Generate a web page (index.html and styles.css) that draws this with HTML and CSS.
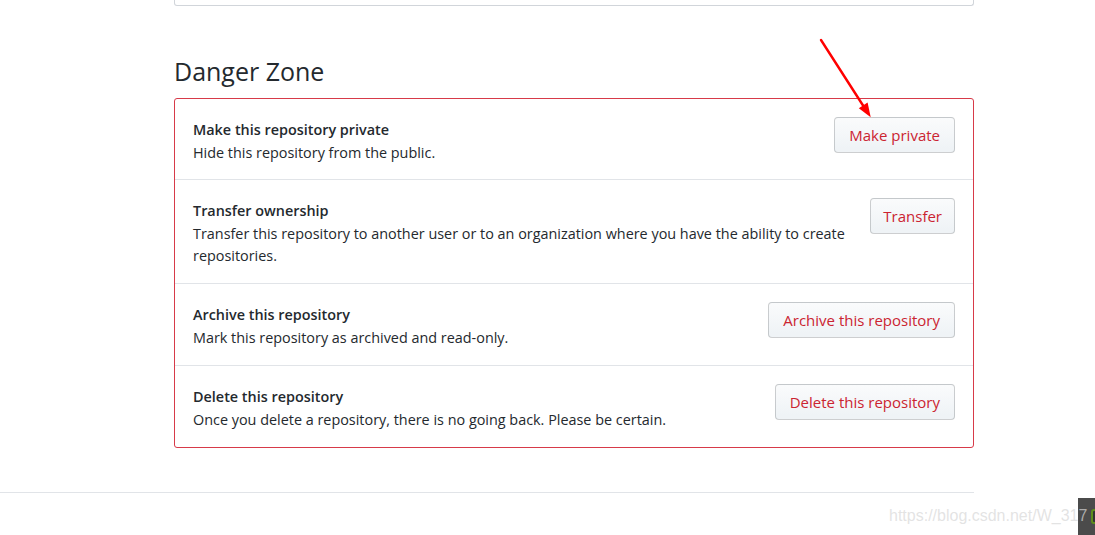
FILE: index.html
```html
<!DOCTYPE html>
<html lang="en">
<head>
<meta charset="utf-8">
<title>Danger Zone</title>
<link rel="stylesheet" href="styles.css">
</head>
<body>
<div class="page">
  <main class="main">
    <div class="prev-box"></div>
    <h2 class="subhead">Danger Zone</h2>
    <div class="danger-box">
      <div class="row">
        <div class="row-text">
          <div class="row-title">Make this repository private</div>
          <div class="row-desc">Hide this repository from the public.</div>
        </div>
        <button class="btn">Make private</button>
      </div>
      <div class="row">
        <div class="row-text">
          <div class="row-title">Transfer ownership</div>
          <div class="row-desc">Transfer this repository to another user or to an organization where you have the ability to create repositories.</div>
        </div>
        <button class="btn btn-transfer">Transfer</button>
      </div>
      <div class="row">
        <div class="row-text">
          <div class="row-title">Archive this repository</div>
          <div class="row-desc">Mark this repository as archived and read-only.</div>
        </div>
        <button class="btn">Archive this repository</button>
      </div>
      <div class="row">
        <div class="row-text">
          <div class="row-title">Delete this repository</div>
          <div class="row-desc">Once you delete a repository, there is no going back. Please be certain.</div>
        </div>
        <button class="btn">Delete this repository</button>
      </div>
    </div>
  </main>
  <footer class="footer"></footer>
</div>

<svg class="arrow" width="1095" height="535" viewBox="0 0 1095 535" aria-hidden="true">
  <line x1="821" y1="40" x2="864" y2="107" stroke="#ff0000" stroke-width="2.4" stroke-linecap="round"/>
  <polygon points="870.7,117.3 867.6,102.6 858.8,108.2" fill="#ff0000"/>
</svg>

<div class="dock"><span class="dock-icon"></span></div>
<div class="watermark">https://blog.csdn.net/W_317</div>
</body>
</html>
```

FILE: styles.css
```css
html, body {
  margin: 0;
  padding: 0;
  background: #ffffff;
}

body {
  font-family: "Open Sans", "Noto Sans", "Liberation Sans", sans-serif;
  color: #24292e;
  width: 1095px;
  height: 535px;
  overflow: hidden;
  position: relative;
}

.page {
  display: flex;
  flex-direction: column;
}

.main {
  width: 800px;
  margin-left: 174px;
}

.prev-box {
  height: 5px;
  border: 1px solid #d1d5da;
  border-top: 0;
  border-radius: 0 0 3px 3px;
}

.subhead {
  margin: 50px 0 12px 0;
  font-size: 25px;
  line-height: 30px;
  font-weight: 400;
  color: #24292e;
}

.danger-box {
  border: 1px solid #d73a49;
  border-radius: 3px;
}

.row {
  display: flex;
  align-items: flex-start;
  justify-content: space-between;
  gap: 20px;
  padding: 18px 18px 16px 18px;
  border-top: 1px solid #e1e4e8;
}

.row:first-child {
  border-top: 0;
  padding-bottom: 15px;
}

.row-text {
  padding-top: 2px;
  font-size: 14.4px;
  line-height: 22px;
}

.row-title {
  font-weight: 600;
  margin-bottom: 1px;
}

.btn {
  flex: none;
  height: 36px;
  box-sizing: border-box;
  padding: 0 14px;
  font-family: inherit;
  font-size: 15px;
  line-height: 34px;
  color: #cb2431;
  background: linear-gradient(180deg, #fafbfc 0%, #eff3f6 90%);
  border: 1px solid rgba(27, 31, 35, 0.2);
  border-radius: 4px;
  white-space: nowrap;
}

.btn-transfer {
  padding: 0 12px;
}

.footer {
  width: 974px;
  margin-top: 44px;
  border-top: 1px solid #e1e4e8;
}

.arrow {
  position: absolute;
  left: 0;
  top: 0;
  pointer-events: none;
}

.dock {
  position: absolute;
  left: 1078px;
  top: 498px;
  width: 17px;
  height: 37px;
  background: #4b4b4b;
}

.dock-icon {
  position: absolute;
  left: 13px;
  top: 11px;
  width: 8px;
  height: 15px;
  box-sizing: border-box;
  border: 2px solid #5e8d1a;
  border-radius: 3px;
  background: #333333;
}

.watermark {
  position: absolute;
  left: 889px;
  top: 506px;
  font-family: "Liberation Sans", Arial, sans-serif;
  font-size: 16px;
  line-height: 20px;
  color: rgba(215, 215, 215, 0.7);
  white-space: nowrap;
}
```
